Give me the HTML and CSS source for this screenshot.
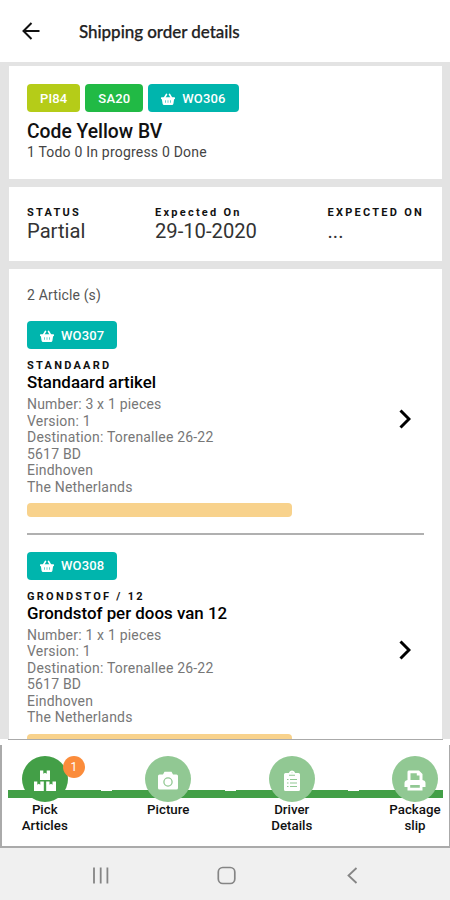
FILE: index.html
```html
<!DOCTYPE html>
<html lang="en">
<head>
<meta charset="utf-8">
<title>Shipping order details</title>
<link rel="stylesheet" href="styles.css">
</head>
<body>
<svg class="defs" aria-hidden="true">
  <symbol id="basket" viewBox="0 0 14 12">
    <path d="M3.400 5 5.500 1.400M10.600 5 8.500 1.400" stroke="currentColor" stroke-width="1.600" stroke-linecap="round" fill="none"/>
    <path fill="currentColor" fill-rule="evenodd" d="M.6 4.200h12.800q.6 0 .6.6v.8q0 .6-.6.6h-.3l-.7 4.600q-.2 1.100-1.100 1.100H2.700q-.9 0-1.100-1.100L.9 6.200H.6Q0 6.200 0 5.600v-.8q0-.6.6-.6zM4.200 7.300v2.400h.6V7.300zm2.500 0v2.400h.6V7.300zm2.500 0v2.400h.6V7.300z"/>
  </symbol>
</svg>
<header class="topbar">
  <svg class="back" viewBox="0 0 18 18"><path d="M17.500 9H2M9.500 1 1.500 9l8 8" fill="none" stroke="#111" stroke-width="2"/></svg>
  <h1>Shipping order details</h1>
</header>
<main class="content">
  <section class="card summary">
    <div class="badges">
      <span class="badge lime">PI84</span>
      <span class="badge green">SA20</span>
      <span class="badge teal"><svg><use href="#basket"/></svg>WO306</span>
    </div>
    <h2>Code Yellow BV</h2>
    <p class="progress">1 Todo 0 In progress 0 Done</p>
  </section>
  <section class="card facts">
    <div class="status"><h3>STATUS</h3><p>Partial</p></div>
    <div class="date"><h3>Expected On</h3><p>29-10-2020</p></div>
    <div class="expected"><h3>EXPECTED ON</h3><p>...</p></div>
  </section>
  <section class="card articles">
    <p class="count">2 Article (s)</p>
    <article class="item">
      <div class="badges"><span class="badge teal"><svg><use href="#basket"/></svg>WO307</span></div>
      <h3>STANDAARD</h3>
      <h4>Standaard artikel</h4>
      <div class="details">
        <p>Number: 3 x 1 pieces<br>Version: 1<br>Destination: Torenallee 26-22<br>5617 BD<br>Eindhoven<br>The Netherlands</p>
        <svg class="chevron" viewBox="0 0 12 20"><path d="M1.500 1.500 10 10 1.500 18.500" fill="none" stroke="#000" stroke-width="3"/></svg>
      </div>
      <div class="meter"></div>
    </article>
    <article class="item">
      <div class="badges"><span class="badge teal"><svg><use href="#basket"/></svg>WO308</span></div>
      <h3>GRONDSTOF / 12</h3>
      <h4>Grondstof per doos van 12</h4>
      <div class="details">
        <p>Number: 1 x 1 pieces<br>Version: 1<br>Destination: Torenallee 26-22<br>5617 BD<br>Eindhoven<br>The Netherlands</p>
        <svg class="chevron" viewBox="0 0 12 20"><path d="M1.500 1.500 10 10 1.500 18.500" fill="none" stroke="#000" stroke-width="3"/></svg>
      </div>
      <div class="meter"></div>
    </article>
  </section>
</main>
<footer class="steps">
  <div class="track"><i></i><i></i><i></i></div>
  <div class="step active">
    <div class="disc">
      <svg viewBox="0 0 24 24"><path fill="#fff" d="M7 1.500h3.300v3.300l1.700-1 1.700 1V1.500H17V11H7zM1 12.500h3.300v3.300l1.500-1 1.500 1v-3.300h3.500V22H1zM13.200 12.500h3.300v3.300l1.500-1 1.500 1v-3.300H23V22h-9.800z"/></svg>
      <span class="alert">1</span>
    </div>
    <p>Pick<br>Articles</p>
  </div>
  <div class="step">
    <div class="disc"><svg viewBox="0 0 24 24"><path fill="#fff" d="M3.500 5.500H7l1.500-2.700h7L17 5.500h3.500Q22 5.500 22 7v12q0 1.500-1.500 1.500h-17Q2 20.500 2 19V7q0-1.500 1.500-1.500z"/><circle cx="12" cy="13" r="4.100" fill="none" stroke="#91c893" stroke-width="1.300"/></svg></div>
    <p>Picture</p>
  </div>
  <div class="step">
    <div class="disc"><svg viewBox="0 0 24 24"><path fill="#fff" d="M5.500 4h3.300Q9.500 1.500 12 1.500T15.200 4h3.300Q20 4 20 5.500v15q0 1.500-1.500 1.500h-13Q4 22 4 20.500v-15Q4 4 5.500 4z"/><path d="M9 6.200h6M11.700 3.800h.6M7 10.500h1.500M10 10.500h7M7 14h1.500M10 14h7M7 17.500h1.500M10 17.500h7" stroke="#91c893" stroke-width="1.100"/></svg></div>
    <p>Driver<br>Details</p>
  </div>
  <div class="step last">
    <div class="disc"><svg viewBox="0 0 24 24"><path fill="#fff" fill-rule="evenodd" d="M5.500 1.500h10.500l3.500 3.500v6q3 .5 3 3v4h-3v3.500h-15V18h-3v-4q0-2.500 3-3V2.500zM7.500 4.300V11h9V6.500h-2.700V4.300zM7.200 16v2.800h9.600V16z"/></svg></div>
    <p>Package<br>slip</p>
  </div>
</footer>
<nav class="system">
  <svg viewBox="0 0 450 52"><path d="M94 19.500v16M100.700 19.500v16M107.400 19.500v16M356.500 20 348.500 27.500 356.500 35" fill="none" stroke="#858585" stroke-width="1.800"/><rect x="218.300" y="19.500" width="16.500" height="16" rx="4.500" fill="none" stroke="#858585" stroke-width="1.700"/></svg>
</nav>
</body>
</html>
```
FILE: styles.css
```css
* { box-sizing: border-box; }
body {
  margin: 0;
  height: 900px;
  display: flex;
  flex-direction: column;
  overflow: hidden;
  background: #fff;
  color: #111;
  font-family: Roboto, "Liberation Sans", sans-serif;
  white-space: nowrap;
}
h1, h2, h3, h4, p { margin: 0; }
.defs { display: none; }
.topbar {
  flex: 0 0 62px;
  display: flex;
  align-items: center;
  padding-left: 22px;
}
.back { width: 18px; height: 18px; margin-right: 39px; }
.topbar h1 {
  font: 500 17px/24px Lato, sans-serif;
  letter-spacing: -0.050px;
  color: #222;
  padding-top: 2px;
  -webkit-text-stroke: 0.250px #222;
}
.content {
  flex: 0 0 677px;
  overflow: hidden;
  display: flex;
  flex-direction: column;
  gap: 8px;
  padding: 4px 8px 0 9px;
  background: #e3e3e3;
}
.card { flex-shrink: 0; background: #fff; padding: 0 18px; }
.summary { height: 112.500px; padding-top: 18px; }
.badges { display: flex; gap: 5px; height: 28px; }
.badge {
  display: flex;
  align-items: center;
  height: 28px;
  padding: 0 13px;
  border-radius: 4px;
  color: #fff;
  font-size: 13px;
  font-weight: 500;
  letter-spacing: 0.150px;
}
.badge svg { width: 14px; height: 12px; margin: 1px 7px 0 0; }
.lime { background: #b5cc18; }
.green { background: #21ba45; }
.teal { background: #00b5ad; }
.summary h2 { font-size: 19.300px; font-weight: 500; line-height: 22px; margin-top: 9px; }
.progress { font-size: 14px; line-height: 18px; color: #444; letter-spacing: 0.200px; }
.facts { height: 74px; display: flex; padding-top: 20px; }
.status { width: 128px; }
.date { width: 172.500px; }
.facts h3, .item h3 {
  font-size: 11px;
  font-weight: 700;
  line-height: 12px;
  letter-spacing: 2.250px;
}
.facts h3 { margin-right: -4px; }
.facts p { font-size: 20.200px; line-height: 24px; color: #333; }
.articles { height: 520px; padding-top: 17px; }
.count { font-size: 14px; line-height: 18px; color: #555; letter-spacing: 0.150px; }
.item { height: 231px; padding-top: 17.500px; }
.count + .item { border-bottom: 2px solid #b0b0b0; }
.item:last-child { padding-top: 17px; }
.item h3 { margin-top: 11px; }
.item h4 { font-size: 16.900px; font-weight: 500; line-height: 20px; color: #000; }
.details {
  display: flex;
  align-items: center;
  justify-content: space-between;
  margin-top: 4px;
  padding-right: 13px;
}
.details p { font-size: 14px; line-height: 16.500px; color: #777; letter-spacing: 0.190px; }
.chevron { width: 12px; height: 20px; margin-top: -53px; }
.meter { width: 265px; height: 13.500px; margin-top: 8px; border-radius: 4px; background: #f8d28c; }
.steps {
  flex: 0 0 109px;
  position: relative;
  display: flex;
  padding-top: 17px;
  border-bottom: 2px solid #aaa;
}
.steps::before { content: ""; position: absolute; left: 8px; right: 7px; top: 0; height: 1px; background: #aaa; }
.steps::after { content: ""; position: absolute; left: 0; right: 0; top: 6px; bottom: 0; border: solid #aaa; border-width: 0 1px 0 2px; }
.step { width: 123.500px; flex: none; display: flex; flex-direction: column; align-items: center; }
.step.active { width: 85.500px; margin: 0 19px 0 2px; }
.step.last { width: 56px; margin-left: 33.500px; }
.disc { width: 46px; height: 46px; border-radius: 50%; background: #91c893; display: grid; place-items: center; position: relative; }
.active .disc { background: #439f47; }
.disc svg { width: 24px; height: 24px; margin-top: 3px; }
.alert {
  position: absolute;
  left: 41px;
  top: 0;
  width: 22px;
  height: 22px;
  border-radius: 50%;
  background: #fb8c3b;
  color: #fff;
  font-size: 12px;
  line-height: 22px;
  text-align: center;
}
.step p { font-size: 13.300px; font-weight: 500; line-height: 15.500px; text-align: center; color: #111; }
.track { position: absolute; left: 8px; right: 7px; top: 51px; height: 7.500px; display: flex; background: #439f47; }
.track i { width: 123.500px; flex: none; display: flex; justify-content: flex-end; }
.track i:first-child { width: 104px; }
.track i::after { content: ""; width: 11px; height: 1px; background: #fff; }
.system { flex: 0 0 52px; background: #f0f0f0; }
.system svg { display: block; width: 450px; height: 52px; }
```
